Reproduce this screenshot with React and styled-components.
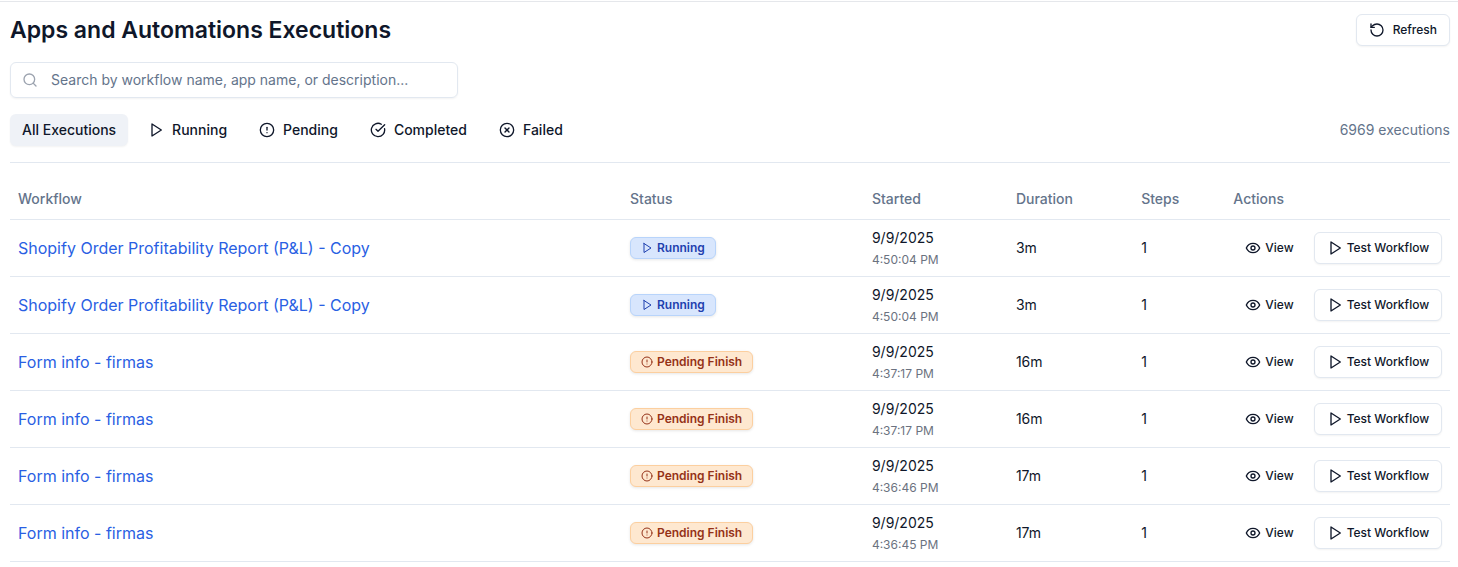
import React, { useState } from "react"
import styled, { createGlobalStyle, css } from "styled-components"
import {
  CircleAlert,
  CircleCheckBig,
  CircleX,
  RotateCcw,
  Search,
} from "lucide-react"

const GlobalStyle = createGlobalStyle`
  *, *::before, *::after {
    box-sizing: border-box;
  }
  body {
    margin: 0;
    background: #fff;
    color: #0f172a;
    font-family: Inter, "Liberation Sans", sans-serif;
    font-size: 14px;
    line-height: 20px;
  }
  button, input {
    font: inherit;
    color: inherit;
  }
`

const StrokeSvg = ({ size, children }) => (
  <svg
    width={size}
    height={size}
    viewBox="0 0 24 24"
    fill="none"
    stroke="currentColor"
    strokeWidth="2"
    strokeLinecap="round"
    strokeLinejoin="round"
    aria-hidden="true"
  >
    {children}
  </svg>
)

const PlayIcon = ({ size = 16 }) => (
  <StrokeSvg size={size}>
    <polygon points="6 3 20 12 6 21 6 3" />
  </StrokeSvg>
)

const EyeIcon = ({ size = 16 }) => (
  <StrokeSvg size={size}>
    <path d="M2 12s3-7 10-7 10 7 10 7-3 7-10 7-10-7-10-7Z" />
    <circle cx="12" cy="12" r="3" />
  </StrokeSvg>
)

const FILTERS = [
  { id: "all", label: "All Executions" },
  { id: "running", label: "Running", icon: PlayIcon },
  { id: "pending", label: "Pending", icon: CircleAlert },
  { id: "completed", label: "Completed", icon: CircleCheckBig },
  { id: "failed", label: "Failed", icon: CircleX },
]

const REPORT = "Shopify Order Profitability Report (P&L) - Copy"
const FORM = "Form info - firmas"

const EXECUTIONS = [
  { id: 1, name: REPORT, status: "running", time: "4:50:04 PM", duration: "3m" },
  { id: 2, name: REPORT, status: "running", time: "4:50:04 PM", duration: "3m" },
  { id: 3, name: FORM, status: "pending", time: "4:37:17 PM", duration: "16m" },
  { id: 4, name: FORM, status: "pending", time: "4:37:17 PM", duration: "16m" },
  { id: 5, name: FORM, status: "pending", time: "4:36:46 PM", duration: "17m" },
  { id: 6, name: FORM, status: "pending", time: "4:36:45 PM", duration: "17m" },
]

const StatusBadge = ({ status }) => {
  const running = status === "running"
  const Icon = running ? PlayIcon : CircleAlert
  return (
    <Badge $status={status}>
      <Icon size={12} />
      {running ? "Running" : "Pending Finish"}
    </Badge>
  )
}

const ExecutionRow = ({ name, status, time, duration }) => {
  return (
    <Row>
      <Cell>
        <WorkflowLink href="#">{name}</WorkflowLink>
      </Cell>
      <Cell>
        <StatusBadge status={status} />
      </Cell>
      <Cell>
        <Started>
          <span>9/9/2025</span>
          <TimeText>{time}</TimeText>
        </Started>
      </Cell>
      <Cell>{duration}</Cell>
      <Cell>1</Cell>
      <Cell>
        <Actions>
          <GhostButton type="button">
            <EyeIcon />
            View
          </GhostButton>
          <OutlineButton type="button">
            <PlayIcon />
            Test Workflow
          </OutlineButton>
        </Actions>
      </Cell>
    </Row>
  )
}

const App = () => {
  const [filter, setFilter] = useState("all")
  const [query, setQuery] = useState("")

  const rows = EXECUTIONS.filter(
    (item) =>
      (filter === "all" || item.status === filter) &&
      item.name.toLowerCase().includes(query.toLowerCase())
  )

  return (
    <Page>
      <GlobalStyle />
      <Header>
        <Title>Apps and Automations Executions</Title>
        <RefreshButton type="button">
          <RotateCcw size={16} />
          Refresh
        </RefreshButton>
      </Header>
      <SearchBox>
        <Search size={16} />
        <SearchInput
          type="text"
          aria-label="Search executions"
          placeholder="Search by workflow name, app name, or description..."
          value={query}
          onChange={(e) => setQuery(e.target.value)}
        />
      </SearchBox>
      <Toolbar>
        <Filters>
          {FILTERS.map(({ id, label, icon: Icon }) => (
            <FilterButton
              key={id}
              type="button"
              $active={filter === id}
              onClick={() => setFilter(id)}
            >
              {Icon && <Icon size={16} />}
              {label}
            </FilterButton>
          ))}
        </Filters>
        <Count>6969 executions</Count>
      </Toolbar>
      <Table>
        <colgroup>
          <Col $width="42.5%" />
          <Col $width="16.8%" />
          <Col $width="10%" />
          <Col $width="8.7%" />
          <Col $width="6.4%" />
          <Col />
        </colgroup>
        <thead>
          <Row>
            <HeadCell>Workflow</HeadCell>
            <HeadCell>Status</HeadCell>
            <HeadCell>Started</HeadCell>
            <HeadCell>Duration</HeadCell>
            <HeadCell>Steps</HeadCell>
            <HeadCell>Actions</HeadCell>
          </Row>
        </thead>
        <tbody>
          {rows.map((item) => (
            <ExecutionRow key={item.id} {...item} />
          ))}
        </tbody>
      </Table>
    </Page>
  )
}

const Page = styled.main`
  border-top: 1px solid #e5e7eb;
  margin-top: 1px;
  padding: 12px 8px 0 10px;
`

const Header = styled.header`
  display: flex;
  align-items: center;
  justify-content: space-between;
`

const Title = styled.h1`
  margin: 0;
  font-size: 23px;
  line-height: 32px;
  font-weight: 600;
`

const buttonBase = css`
  display: inline-flex;
  align-items: center;
  height: 32px;
  padding: 0 12px;
  border: none;
  border-radius: 6px;
  background: transparent;
  font-size: 12px;
  line-height: 16px;
  font-weight: 500;
  white-space: nowrap;
  cursor: pointer;

  &:hover {
    background: #f1f5f9;
  }
`

const GhostButton = styled.button`
  ${buttonBase}
  gap: 4px;
`

const OutlineButton = styled.button`
  ${buttonBase}
  gap: 4px;
  border: 1px solid #e2e8f0;
  background: #fff;
  box-shadow: 0 1px 2px rgba(0, 0, 0, 0.05);
`

const RefreshButton = styled(OutlineButton)`
  gap: 8px;
`

const SearchBox = styled.label`
  display: flex;
  align-items: center;
  gap: 13px;
  width: 100%;
  max-width: 448px;
  height: 36px;
  margin-top: 16px;
  padding: 0 11px;
  border: 1px solid #e2e8f0;
  border-radius: 6px;
  box-shadow: 0 1px 2px rgba(0, 0, 0, 0.05);
  color: #9ca3af;
`

const SearchInput = styled.input`
  flex: 1;
  min-width: 0;
  padding: 0;
  border: none;
  outline: none;
  background: transparent;
  color: #0f172a;

  &::placeholder {
    color: #64748b;
    opacity: 1;
  }
`

const Toolbar = styled.div`
  display: flex;
  align-items: center;
  justify-content: space-between;
  padding: 16px 0;
  border-bottom: 1px solid #e2e8f0;
`

const Filters = styled.div`
  display: flex;
  gap: 8px;
`

const FilterButton = styled.button`
  ${buttonBase}
  gap: 8px;
  font-size: 14px;
  line-height: 20px;

  ${({ $active }) =>
    $active &&
    css`
      background: #eff2f7;
      box-shadow: 0 1px 2px rgba(0, 0, 0, 0.05);
    `}
`

const Count = styled.span`
  color: #64748b;
`

const Table = styled.table`
  width: 100%;
  margin-top: 16px;
  border-collapse: collapse;
  table-layout: fixed;
`

const Col = styled.col`
  width: ${({ $width }) => $width || "auto"};
`

const Row = styled.tr`
  border-bottom: 1px solid #e2e8f0;
`

const HeadCell = styled.th`
  height: 40px;
  padding: 0 8px;
  color: #64748b;
  font-weight: 500;
  text-align: left;
`

const Cell = styled.td`
  height: 57px;
  padding: 8px;
  vertical-align: middle;
`

const WorkflowLink = styled.a`
  color: #2a5fe3;
  font-size: 16px;
  line-height: 24px;
  text-decoration: none;

  &:hover {
    text-decoration: underline;
  }
`

const Badge = styled.span`
  display: inline-flex;
  align-items: center;
  gap: 4px;
  padding: 2px 10px;
  border: 1px solid #b8d4fb;
  border-radius: 6px;
  background: #d8e6fd;
  color: #1e40af;
  box-shadow: 0 1px 3px rgba(0, 0, 0, 0.1);
  font-size: 12px;
  line-height: 16px;
  font-weight: 600;

  ${({ $status }) =>
    $status === "pending" &&
    css`
      border-color: #fccf9f;
      background: #fee8d0;
      color: #953218;
    `}
`

const Started = styled.div`
  display: flex;
  flex-direction: column;
  gap: 4px;
`

const TimeText = styled.span`
  color: #6b7280;
  font-size: 12px;
  line-height: 16px;
`

const Actions = styled.div`
  display: flex;
  gap: 8px;
`

export default App
